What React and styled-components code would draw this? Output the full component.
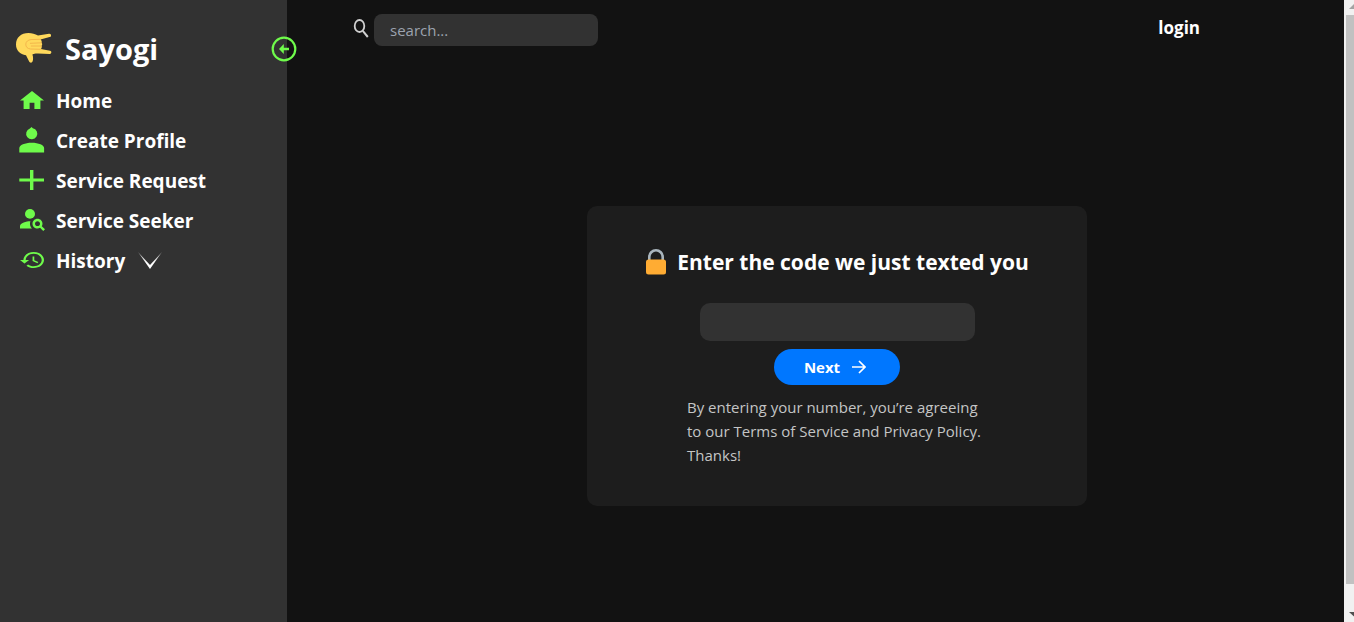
import React from "react";
import styled, { createGlobalStyle } from "styled-components";

const GlobalStyle = createGlobalStyle`
  *, *::before, *::after { box-sizing: border-box; }
  body {
    margin: 0;
    background: #121212;
    color: #fff;
    font-family: "Segoe UI", "Open Sans", "Noto Sans", sans-serif;
    font-size: 15px;
    line-height: 24px;
  }
`;

const Page = styled.div`
  display: flex;
  min-height: 100vh;
`;

const Sidebar = styled.aside`
  position: relative;
  flex: 0 0 287px;
  background: #323232;
`;

const Brand = styled.div`
  display: flex;
  align-items: center;
  gap: 13px;
  height: 81px;
  padding: 16px 16px 0;
`;

const HandIcon = styled.svg`
  flex: none;
  width: 36px;
  height: 30px;
  margin-bottom: 2px;
`;

const BrandName = styled.span`
  font-size: 29px;
  line-height: 40px;
  font-weight: 700;
`;

const Toggle = styled.button`
  position: absolute;
  top: 36px;
  right: -10px;
  width: 26px;
  height: 26px;
  padding: 0;
  border: 0;
  background: none;
  cursor: pointer;

  svg { display: block; }
`;

const NavList = styled.ul`
  margin: 0;
  padding: 0;
  list-style: none;
`;

const NavLink = styled.a`
  display: flex;
  align-items: center;
  height: 40px;
  padding-left: 19px;
  color: #fff;
  font-size: 19px;
  font-weight: 700;
  text-decoration: none;
`;

const IconSlot = styled.span`
  display: flex;
  align-items: center;
  justify-content: center;
  width: 26px;
  height: 28px;
  margin: 0 11px 2px 0;
  color: #6ffb4b;
`;

const Chevron = styled.svg`
  margin-left: 12px;
`;

const Main = styled.main`
  display: flex;
  flex: 1;
  flex-direction: column;
  min-width: 0;
`;

const TopBar = styled.header`
  display: flex;
  align-items: flex-start;
  justify-content: space-between;
  height: 90px;
  padding: 14px 144px 0 66px;
`;

const Search = styled.label`
  display: flex;
  align-items: center;
  gap: 5px;

  svg { margin-bottom: 2px; }
`;

const SearchInput = styled.input`
  width: 224px;
  height: 32px;
  padding: 0 16px;
  border: 0;
  border-radius: 8px;
  background: #323232;
  color: #fff;
  font: inherit;

  &::placeholder { color: #9ca3af; opacity: 1; }
`;

const LoginLink = styled.a`
  color: #fff;
  font-size: 17px;
  line-height: 28px;
  font-weight: 700;
  text-decoration: none;
`;

const Content = styled.div`
  display: flex;
  flex: 1;
  align-items: center;
  justify-content: center;
  padding-left: 43px;
`;

const Card = styled.form`
  display: flex;
  flex-direction: column;
  align-items: center;
  width: 500px;
  min-height: 300px;
  padding: 40px 16px 38px;
  border-radius: 10px;
  background: #1d1d1d;
`;

const CardTitle = styled.h1`
  display: flex;
  align-items: center;
  gap: 10px;
  margin: 0 0 25px;
  font-size: 21px;
  line-height: 32px;
  font-weight: 700;
`;

const CodeInput = styled.input`
  width: 275px;
  height: 38px;
  padding: 0 16px;
  border: 0;
  border-radius: 10px;
  background: #323232;
  color: #fff;
  font: inherit;
`;

const NextButton = styled.button`
  display: flex;
  align-items: center;
  justify-content: center;
  gap: 12px;
  width: 126px;
  height: 36px;
  margin: 8px 0 10px;
  padding: 0 4px 0 0;
  border: 0;
  border-radius: 18px;
  background: #0077ff;
  color: #fff;
  font: inherit;
  font-weight: 700;
  cursor: pointer;
`;

const Terms = styled.p`
  width: 300px;
  margin: 0;
  color: #c4c5c5;
`;

const ScrollTrack = styled.div`
  display: flex;
  flex: 0 0 10px;
  flex-direction: column;
  align-items: flex-end;
  background: #f1f1f1;
`;

const ScrollThumb = styled.div`
  flex: 1;
  width: 8px;
  margin: 4px 0 26px;
  background: #c1c1c1;
`;

const ScrollArrow = styled.svg`
  display: block;
  flex: none;
`;

const HomeIcon = () => (
  <svg width="24" height="18" viewBox="2 3 20 17" preserveAspectRatio="none" fill="currentColor">
    <path d="M10 20v-6h4v6h5v-8h3L12 3 2 12h3v8z" />
  </svg>
);

const ProfileIcon = () => (
  <svg width="26" height="26" viewBox="0 0 26 26" fill="currentColor">
    <path d="M12.600 0l1.200 1.300a5.600 5.500 0 1 1-2.900.2z" />
    <path d="M.3 25.400V21c0-3 5.500-5.300 12.400-5.300S25.100 18 25.100 21v4.400z" />
  </svg>
);

const PlusIcon = () => (
  <svg width="26" height="22" viewBox="0 0 26 22" fill="currentColor">
    <path d="M11 1h3.400v8.500H25v3H14.400V21H11v-8.500H.3v-3H11z" />
  </svg>
);

const SeekerIcon = () => (
  <svg width="25" height="22" viewBox="2 4 20 18" preserveAspectRatio="none" fill="currentColor">
    <circle cx="10" cy="8" r="4" />
    <path d="M10.350 14.010C7.620 13.910 2 15.270 2 18v2h9.540c-2.470-2.760-1.230-5.890-1.190-5.990z" />
    <path d="M19.430 18.020c.36-.59.57-1.280.57-2.020 0-2.210-1.790-4-4-4s-4 1.790-4 4 1.790 4 4 4c.74 0 1.430-.22 2.020-.57L20.590 22 22 20.590l-2.570-2.570zM16 18c-1.100 0-2-.9-2-2s.9-2 2-2 2 .9 2 2-.9 2-2 2z" />
  </svg>
);

const HistoryIcon = () => (
  <svg width="24" height="16" viewBox="1 3 21 18" preserveAspectRatio="none" fill="currentColor">
    <path d="M13 3c-4.970 0-9 4.030-9 9H1l3.890 3.890.07.14L9 12H6c0-3.870 3.130-7 7-7s7 3.130 7 7-3.130 7-7 7c-1.930 0-3.680-.79-4.940-2.060l-1.420 1.420C8.270 19.990 10.510 21 13 21c4.970 0 9-4.030 9-9s-4.030-9-9-9zm-1 5v5l4.280 2.540.72-1.210-3.500-2.080V8H12z" />
  </svg>
);

const navItems = [
  { label: "Home", Icon: HomeIcon },
  { label: "Create Profile", Icon: ProfileIcon },
  { label: "Service Request", Icon: PlusIcon },
  { label: "Service Seeker", Icon: SeekerIcon },
  { label: "History", Icon: HistoryIcon, expandable: true },
];

export default function App() {
  return (
    <>
      <GlobalStyle />
      <Page>
        <Sidebar>
          <Brand>
            <HandIcon viewBox="0 0 36 30" aria-hidden="true">
              <path
                d="M0 11.500C0 4.500 5 0 12.500 0c3.500 0 6.500 1 9.500 2.600L33 .8c2.500-.3 2.800 2.800.6 3.300L24.500 6.500c1.200.8 1.500 2 1 3.200.9.900.9 2.200.1 3.100.4 1.300.1 2.400-.8 3.200l9.200 1.700c2 .4 1.700 3.400-.4 3.300L22 20.500c-2.500-.1-4 .2-5.600 1 .7 2 .9 3.800.4 6.200-.5 2.500-3 2.500-3.900.4L10 22.300C4 21.500 0 17.500 0 11.500z"
                fill="#ffd95c"
              />
              <path
                d="M24.500 6.300L15 6.600c-3 .3-5 2-5.200 4.400-.2 3 1.700 4.700 4.700 5l10 .3M25.300 9.800l-11 .5M25.300 13h-10"
                fill="none"
                stroke="#f2b24a"
                strokeWidth=".9"
                strokeLinecap="round"
              />
            </HandIcon>
            <BrandName>Sayogi</BrandName>
          </Brand>
          <Toggle type="button" aria-label="Collapse sidebar">
            <svg width="26" height="26" viewBox="0 0 26 26">
              <circle cx="13" cy="13" r="11.300" fill="none" stroke="#6ffb4b" strokeWidth="2.200" />
              <path d="M8 13l4.800-5v3.700H18v2.600h-5.200V18z" fill="#6ffb4b" />
            </svg>
          </Toggle>
          <nav>
            <NavList>
              {navItems.map(({ label, Icon, expandable }) => (
                <li key={label}>
                  <NavLink href="#">
                    <IconSlot aria-hidden="true"><Icon /></IconSlot>
                    {label}
                    {expandable && (
                      <Chevron width="26" height="20" viewBox="0 0 26 20" aria-hidden="true">
                        <defs>
                          <linearGradient id="chevronFade" x1="0" y1="0" x2="0" y2="1">
                            <stop offset="0" stopColor="#fff" stopOpacity="0.500" />
                            <stop offset="0.600" stopColor="#fff" />
                          </linearGradient>
                        </defs>
                        <path d="M1 1l12 13L25 1 13 18z" fill="url(#chevronFade)" />
                      </Chevron>
                    )}
                  </NavLink>
                </li>
              ))}
            </NavList>
          </nav>
        </Sidebar>
        <Main>
          <TopBar>
            <Search>
              <svg width="16" height="22" viewBox="0 0 16 22" aria-hidden="true">
                <ellipse cx="6.500" cy="8" rx="4.800" ry="6" fill="none" stroke="#d0d0d0" strokeWidth="1.800" />
                <path d="M9.800 12.800l5 6.200" stroke="#d0d0d0" strokeWidth="2" />
              </svg>
              <SearchInput type="text" placeholder="search..." aria-label="Search" />
            </Search>
            <LoginLink href="#">login</LoginLink>
          </TopBar>
          <Content>
            <Card onSubmit={(event) => event.preventDefault()}>
              <CardTitle>
                <svg width="22" height="26" viewBox="0 0 22 26" aria-hidden="true">
                  <path d="M4.300 12V8a6.700 6.700 0 0 1 13.400 0v4" fill="none" stroke="#a9b5bd" strokeWidth="2.600" />
                  <rect x="1" y="10.500" width="20" height="15" rx="2.500" fill="#ffac33" />
                </svg>
                Enter the code we just texted you
              </CardTitle>
              <CodeInput type="text" inputMode="numeric" aria-label="Verification code" />
              <NextButton type="submit">
                Next
                <svg width="14" height="14" viewBox="0 0 14 14" aria-hidden="true">
                  <path d="M0 7h12.500M7 1l6 6-6 6" fill="none" stroke="#fff" strokeWidth="1.700" />
                </svg>
              </NextButton>
              <Terms>
                By entering your number, you’re agreeing to our Terms of Service and Privacy Policy. Thanks!
              </Terms>
            </Card>
          </Content>
        </Main>
        <ScrollTrack aria-hidden="true">
          <ScrollArrow width="8" height="11" viewBox="0 0 8 11">
            <path d="M3 9l5-5v5z" fill="#a3a3a3" />
          </ScrollArrow>
          <ScrollThumb />
          <ScrollArrow width="8" height="12" viewBox="0 0 8 12">
            <path d="M3 2h5v4.500z" fill="#505050" />
          </ScrollArrow>
        </ScrollTrack>
      </Page>
    </>
  );
}
